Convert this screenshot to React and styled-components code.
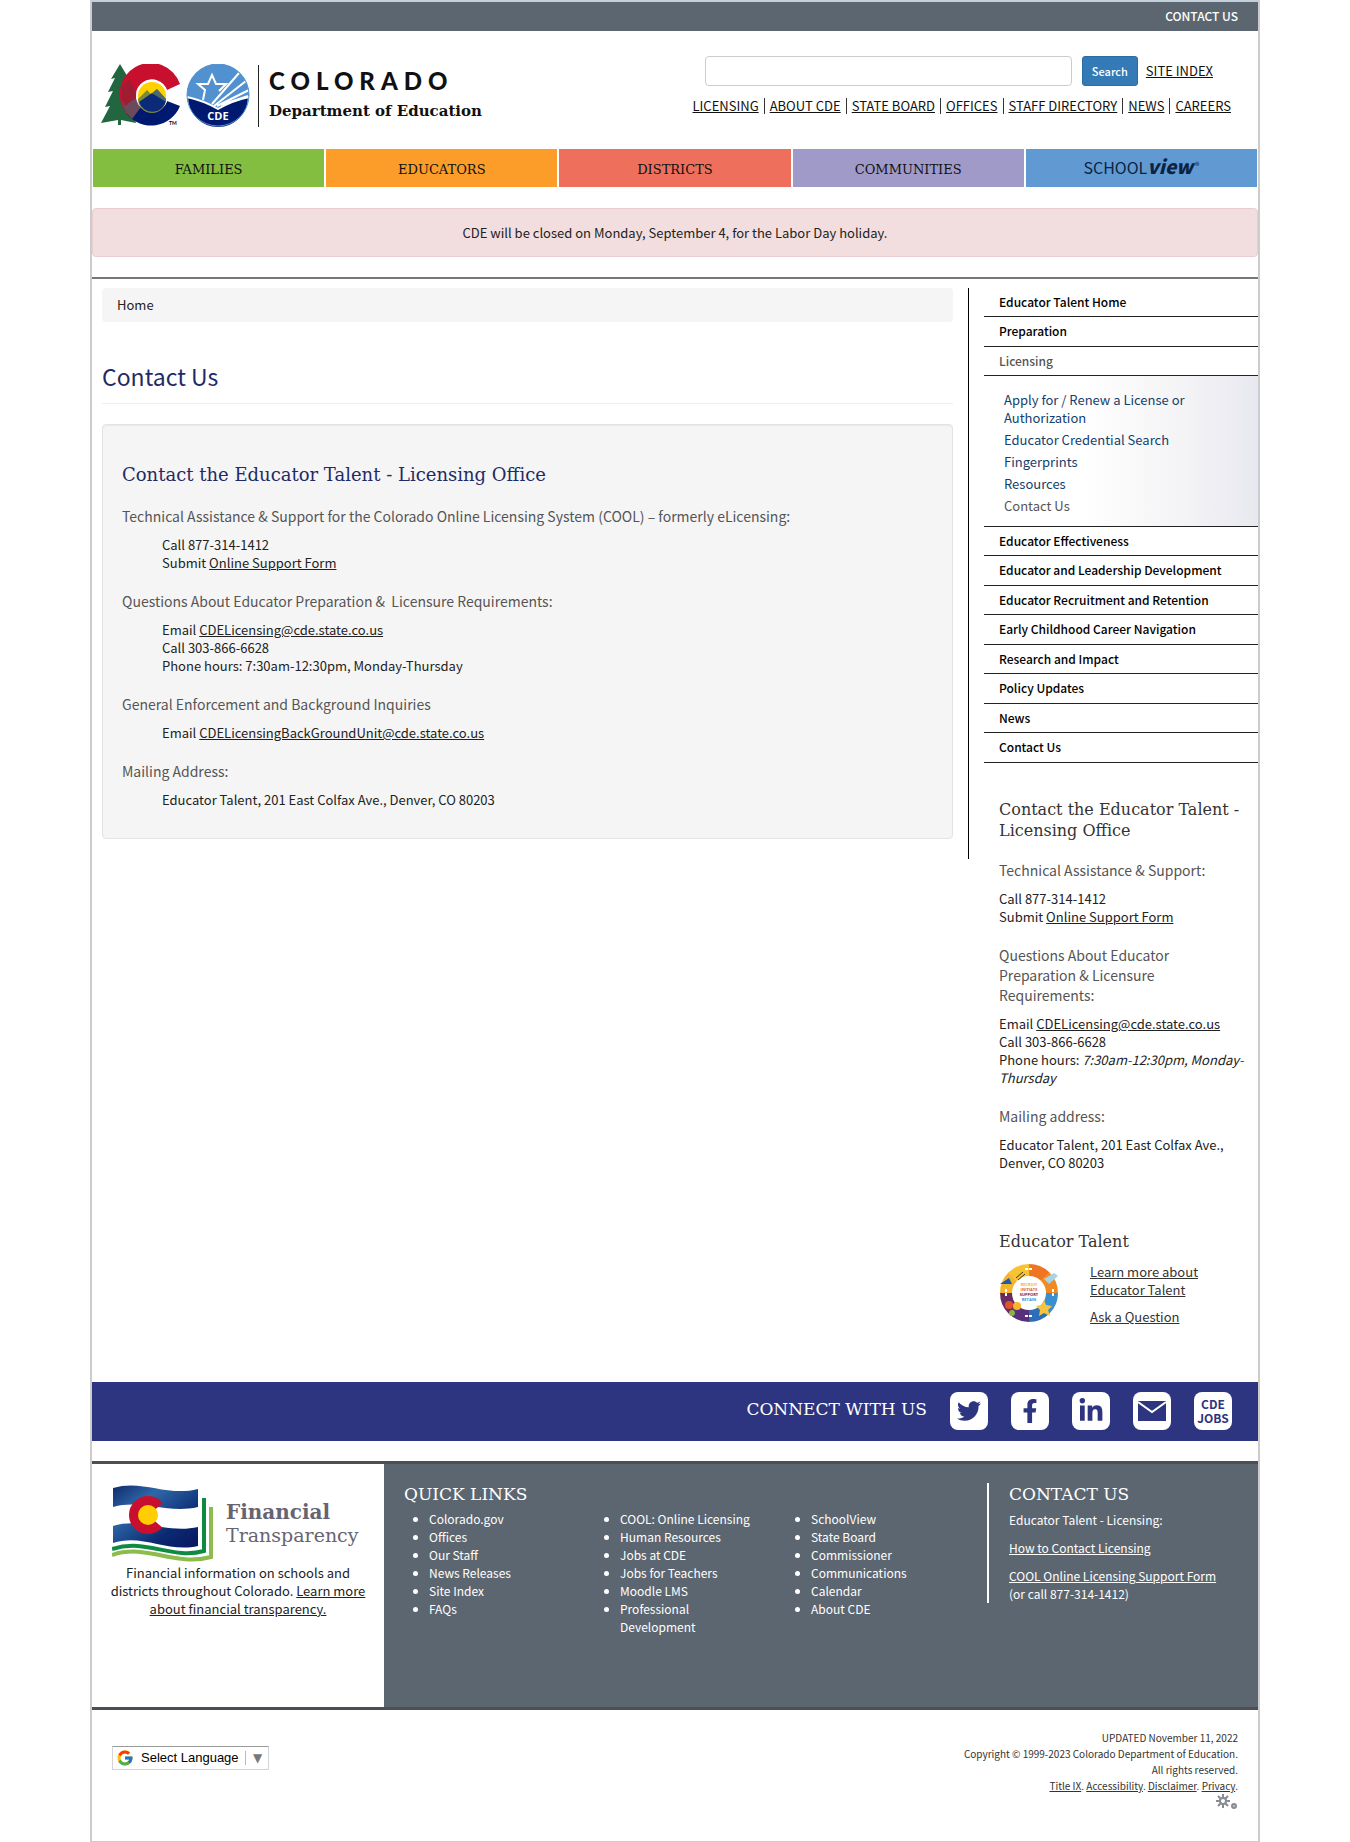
import React from "react";
import styled, { createGlobalStyle } from "styled-components";
import { FaTwitter, FaFacebookF, FaLinkedinIn } from "react-icons/fa";
import { FcGoogle } from "react-icons/fc";

const sans = `"Noto Sans CJK SC", "Noto Sans", sans-serif`;
const slab = `"DejaVu Serif", serif`;
const slate = "#5c6670";
const navy = "#1f2a66";

const GlobalStyle = createGlobalStyle`
  *, *::before, *::after { box-sizing: border-box; }
  body { margin: 0; background: #fff; color: #333; font: 400 13px/18px ${sans}; }
  h1, h2, h3, p, ul, address { margin: 0; padding: 0; font-weight: 400; font-style: normal; }
  ul { list-style: none; }
  a { color: inherit; }
`;

const Page = styled.div`
  max-width: 1170px;
  margin: 0 auto;
  border: 2px solid #ccc;
  border-top-color: #c3d0dc;
`;

const TopBar = styled.div`
  display: flex;
  justify-content: flex-end;
  align-items: center;
  height: 29px;
  padding: 0 20px 2px 0;
  background: ${slate};
`;

const TopLink = styled.a`
  color: #fff;
  font-size: 12px;
  font-weight: 500;
  text-decoration: none;
`;

const Header = styled.header`
  display: flex;
  justify-content: space-between;
  align-items: flex-start;
  height: 118px;
  padding: 25px 27px 0 9px;
`;

const Brand = styled.a`
  display: flex;
  align-items: center;
  padding-top: 8px;
  color: #111;
  text-decoration: none;
`;

const BrandText = styled.span`
  display: flex;
  flex-direction: column;
  gap: 2px;
  height: 62px;
  margin-left: 8px;
  padding-left: 10px;
  border-left: 1px solid #222;
`;

const BrandName = styled.span`
  font: 900 24px/32px Lato, sans-serif;
  letter-spacing: 6px;
`;

const BrandUnit = styled.span`
  font: 700 15px/24px ${slab};
`;

const HeaderTools = styled.div`
  display: flex;
  flex-direction: column;
  gap: 10px;
`;

const SearchForm = styled.form`
  display: flex;
  align-items: center;
  gap: 8px;
  padding: 0 18px 0 12px;
`;

const SearchInput = styled.input`
  flex: 1;
  height: 30px;
  margin-right: 2px;
  padding: 4px 12px;
  border: 1px solid #ccc;
  border-radius: 4px;
  font: 400 13px/18px ${sans};
`;

const SearchButton = styled.button`
  width: 56px;
  height: 30px;
  padding: 0;
  border: 1px solid #2e6da4;
  border-radius: 3px;
  background: #337ab7;
  color: #fff;
  font: 500 11px/18px ${sans};
`;

const DarkLink = styled.a`
  color: #111;
  font-size: 13px;
  line-height: 20px;
`;

const UtilityNav = styled.nav`
  display: flex;
  align-items: center;
  gap: 5px;
`;

const Divider = styled.span`
  width: 1px;
  height: 16px;
  background: #333;
`;

const AudienceNav = styled.nav`
  display: grid;
  grid-template-columns: repeat(5, 1fr);
  gap: 2px;
  padding: 0 1px;
`;

const AudienceTab = styled.a`
  display: flex;
  justify-content: center;
  align-items: center;
  height: 38px;
  padding-top: 4px;
  background: ${(p) => p.$color};
  color: #111;
  font: 400 13px/18px ${slab};
  text-decoration: none;
`;

const SchoolMark = styled.span`
  display: flex;
  align-items: baseline;
  padding-bottom: 8px;
  color: #0c2340;
  font: 400 16px/24px ${sans};

  b { font-size: 19px; font-weight: 900; font-style: italic; }
  small { margin-left: 2px; font-size: 9px; line-height: 12px; align-self: center; }
`;

const Alert = styled.div`
  margin-top: 21px;
  padding: 15px;
  border: 1px solid #ebccd1;
  border-radius: 4px;
  background: #f2dede;
  color: #222;
  line-height: 17px;
  text-align: center;
`;

const Main = styled.main`
  display: flex;
  align-items: flex-start;
  gap: 15px;
  margin-top: 20px;
  padding: 9px 0 56px 10px;
  border-top: 2px solid #777;
`;

const Content = styled.section`
  flex: 1;
  min-width: 0;
  padding: 0 15px 20px 0;
  border-right: 1px solid #000;
`;

const Breadcrumb = styled.nav`
  padding: 8px 15px;
  border-radius: 4px;
  background: #f5f5f5;

  a { color: #222; text-decoration: none; }
`;

const PageTitle = styled.h1`
  margin-top: 40px;
  padding-bottom: 13px;
  border-bottom: 1px solid #eee;
  color: ${navy};
  font-size: 23px;
  line-height: 28px;
`;

const Well = styled.div`
  margin-top: 20px;
  padding: 39px 19px 29px;
  border: 1px solid #e3e3e3;
  border-radius: 4px;
  background: #f5f5f5;
  box-shadow: inset 0 1px 1px rgba(0, 0, 0, 0.05);
`;

const WellTitle = styled.h2`
  padding-bottom: 1px;
  color: ${navy};
  font: 400 18px/22px ${slab};
`;

const AsideTitle = styled.h2`
  margin-top: ${(p) => p.$space};
  color: #333;
  font: 400 16px/21px ${slab};
`;

const Topic = styled.h3`
  margin: 19px 0 10px;
  color: #555;
  font-size: 14px;
  line-height: 20px;
`;

const Details = styled.address`
  padding-left: ${(p) => (p.$indent ? "40px" : "0")};
  color: #222;
`;

const Sidebar = styled.aside`
  flex: 0 0 274px;
`;

const SideItem = styled.li`
  height: 29px;
  padding: 5px 15px;
  border-bottom: 1px solid #222;
  font-size: 12px;
  font-weight: 500;

  &:nth-child(even) { height: 30px; }

  a { color: ${(p) => (p.$current ? "#555" : "#000")}; text-decoration: none; }
`;

const SubMenu = styled.li`
  padding: 15px 20px 11px;
  border-bottom: 1px solid #222;
  background: linear-gradient(to right, #fff 35%, #f3f3f5 75%, #e8e8f0);

  ul { display: flex; flex-direction: column; gap: 4px; }
`;

const SubLink = styled.a`
  display: block;
  max-width: 200px;
  color: ${(p) => (p.$current ? "#555" : "#14406e")};
  text-decoration: none;
`;

const SideBlock = styled.div`
  padding: 0 11px 0 15px;
`;

const TalentRow = styled.div`
  display: flex;
  gap: 30px;
  margin-top: 11px;
`;

const TalentLinks = styled.div`
  display: flex;
  flex-direction: column;
  align-items: flex-start;
  gap: 9px;
  max-width: 120px;
`;

const ConnectBar = styled.section`
  display: flex;
  justify-content: flex-end;
  align-items: center;
  gap: 23px;
  height: 59px;
  padding: 0 26px 2px 0;
  background: #2d3580;
`;

const ConnectTitle = styled.h2`
  padding-bottom: 4px;
  color: #fff;
  font: 400 17px/22px ${slab};
`;

const SocialLink = styled.a`
  display: flex;
  flex-direction: column;
  justify-content: center;
  align-items: center;
  width: 38px;
  height: 38px;
  border-radius: 8px;
  background: #fff;
  color: #2d3580;
  font: 700 12px/14px ${sans};
  text-decoration: none;
`;

const Footer = styled.footer`
  display: flex;
  margin-top: 20px;
  border: solid #4b5054;
  border-width: 3px 0;
  background: ${slate};
  color: #fff;
`;

const Finance = styled.section`
  flex: 0 0 292px;
  padding: 20px 16px;
  background: #fff;
  color: #222;
  text-align: center;
`;

const FinanceBrand = styled.div`
  display: flex;
  align-items: center;
  gap: 12px;
  height: 80px;
  padding-left: 4px;
  color: #666470;
  font: 400 19px/23px ${slab};
  text-align: left;

  b { display: block; font-size: 20px; }
`;

const FooterTitle = styled.h2`
  font: 400 17px/22px ${slab};
`;

const QuickLinks = styled.section`
  flex: 1;
  padding: 19px 10px 71px 20px;
  font-size: 12px;
  font-weight: 500;
`;

const LinkColumns = styled.div`
  display: grid;
  grid-template-columns: repeat(3, 1fr);
  margin-top: 5px;
`;

const LinkList = styled.ul`
  padding: 0 24px 0 25px;
  list-style: disc;

  a { text-decoration: none; }
`;

const FooterContact = styled.section`
  display: flex;
  flex-direction: column;
  align-self: flex-start;
  gap: 10px;
  flex: 0 0 271px;
  margin-top: 19px;
  padding-left: 20px;
  border-left: 2px solid #fff;
  font-size: 12px;
  font-weight: 500;

  h2 { margin-bottom: -4px; }
`;

const Legal = styled.div`
  display: flex;
  justify-content: space-between;
  align-items: flex-start;
  padding: 20px 20px 31px;
`;

const Language = styled.label`
  display: flex;
  align-items: center;
  height: 24px;
  margin-top: 16px;
  padding: 0 6px 0 3px;
  border: 1px solid #d5d5d5;
  border-top-color: #9b9b9b;
  color: #777;
  font: 400 13px/20px "Liberation Sans", sans-serif;
`;

const LanguageSelect = styled.select`
  appearance: none;
  margin: 0 6px 0 7px;
  padding: 0;
  border: 0;
  background: none;
  color: #000;
  font: inherit;
`;

const LanguageArrow = styled.span`
  padding-left: 7px;
  border-left: 1px solid #bbb;
  font: 400 12px/14px "DejaVu Sans", sans-serif;
`;

const LegalText = styled.div`
  color: #333;
  font-size: 10px;
  line-height: 16px;
  text-align: right;

  svg { display: block; margin-left: auto; }
`;

function StateLogo() {
  return (
    <svg width="149" height="63" viewBox="0 0 149 63" aria-hidden="true">
      <path d="M19 0l12 20-5-1 8 15-5-1 6 26-15-3v5h-3v-5L0 59l9-17-5 1 8-16-5 1 7-14-4 1z" fill="#22663f" />
      <path d="M79 20A31 31 0 1 0 26 50L40 43A16 16 0 1 1 66 26z" fill="#c8102e" />
      <path d="M26 50A31 31 0 0 0 79 42L66 37A16 16 0 0 1 39 42z" fill="#001970" />
      <path d="M21 38a31 31 0 0 0 10 17l9-12a16 16 0 0 1-4-8z" fill="#6b4a5c" />
      <path d="M21 22q-2 12 3 20l13-10-8-16z" fill="#a01c33" />
      <circle cx="51" cy="32" r="16" fill="#fff" />
      <circle cx="51" cy="32" r="14" fill="#ffd100" />
      <path d="M37 35l9-9 5 5 5-6 9 10a14 14 0 0 1-28 0z" fill="#7d8a3d" />
      <path d="M38 38l13-9 14 8a14 14 0 0 1-27 1z" fill="#0b2a78" />
      <path d="M56 25l9 10v3l-14-9z" fill="#4a6a6e" />
      <text x="68" y="61" fontFamily="Lato, sans-serif" fontSize="5" fontWeight="700">TM</text>
      <circle cx="117" cy="31" r="31" fill="#5291cf" />
      <path d="M86 33q18 4 31 12 13-8 31-12a31 31 0 0 1-62 0z" fill="#001970" stroke="#fff" strokeWidth="2" />
      <g fill="none" stroke="#fff" strokeWidth="2">
        <path d="M102 36l2-10-7-6h10l4-9 4 9h10l-7 7" />
        <path d="M111 40l27-31M113 42l32-25M116 42l32-16M120 41l27-9" />
      </g>
      <text x="117" y="56" textAnchor="middle" fill="#fff" fontFamily="Open Sans, sans-serif" fontSize="11" fontWeight="700">CDE</text>
      <circle cx="117" cy="31" r="31" fill="none" stroke="#5291cf" strokeWidth="1" />
    </svg>
  );
}

function FlagLogo() {
  return (
    <svg width="102" height="78" viewBox="0 0 102 78" aria-hidden="true">
      <defs>
        <linearGradient id="flagBlue" x1="0" y1="0" x2="1" y2="1">
          <stop offset="0" stopColor="#102a6c" />
          <stop offset="0.3" stopColor="#2e68a8" />
          <stop offset="0.7" stopColor="#0b2a72" />
          <stop offset="1" stopColor="#0a1560" />
        </linearGradient>
      </defs>
      <path d="M1 3C30-6 55 12 86 4V61C55 68 30 48 1 58z" fill="url(#flagBlue)" />
      <path d="M1 22C30 14 55 29 86 22V42C55 49 30 32 1 41z" fill="#fff" />
      <circle cx="36" cy="30" r="14" fill="none" stroke="#c8102e" strokeWidth="10" strokeDasharray="68 20" strokeDashoffset="-10" />
      <circle cx="36" cy="30" r="10" fill="#ffcd00" />
      <path d="M92 13V66C60 75 35 53 0 64" fill="none" stroke="#0f8a43" strokeWidth="4" />
      <path d="M99 22V72C62 82 35 58 0 70" fill="none" stroke="#8dbb4c" strokeWidth="4" />
    </svg>
  );
}

const ringColors = ["#ee7623", "#f08a24", "#3a8fd0", "#2c6fb8", "#56307a", "#6a2b62", "#f4b52e", "#f7c331"];
const ringWords = [["RECRUIT", "#f2b233"], ["INITIATE", "#e2602a"], ["SUPPORT", "#7a2340"], ["RETAIN", "#3a8fd0"]];

function TalentRing() {
  return (
    <svg width="61" height="61" viewBox="0 0 61 61" role="img" aria-label="Educator Talent cycle">
      <g fill="none" strokeWidth="12">
        {ringColors.map((color, i) => (
          <circle key={i} cx="30" cy="30" r="23" stroke={color} strokeDasharray="18.1 127" transform={`rotate(${i * 45 - 90} 30 30)`} />
        ))}
      </g>
      <path d="M1 21l9-6 3 6z" fill="#1f5ca8" />
      <path d="M17 15l7-6M19 17l7-6" stroke="#333" />
      <path d="M45 16l10-6 4 3-9 8z" fill="#a7d3e6" />
      <circle cx="10" cy="42" r="4" fill="#e2502a" />
      <circle cx="18" cy="43" r="4" fill="#f7b52e" />
      <circle cx="13" cy="50" r="3" fill="#8ab33f" />
      <path d="M45 37l2 5 6 1-4 4 2 6-6-3-5 3 1-6-4-4 5-1z" fill="#f5c542" />
      <path d="M26 6h8M26 53h8M54 26v8M7 26v8" stroke="#fff" strokeWidth="2" strokeDasharray="3 1" />
      <g fontFamily="Open Sans, sans-serif" fontSize="4" fontWeight="700" textAnchor="middle">
        {ringWords.map(([word, color], i) => (
          <text key={word} x="30" y={23 + i * 5} fill={color}>{word}</text>
        ))}
      </g>
    </svg>
  );
}

function MailIcon() {
  return (
    <svg width="28" height="20" viewBox="0 0 28 20" aria-hidden="true">
      <path d="M0 0h28v20H0z" fill="#2d3580" />
      <path d="M0 1l14 10L28 1" fill="none" stroke="#fff" strokeWidth="2" />
    </svg>
  );
}

function GearsIcon() {
  return (
    <svg width="22" height="16" viewBox="0 0 22 16" aria-hidden="true">
      <g stroke="#8a8c94" strokeWidth="2">
        <path d="M7 0v4M7 10v4M0 7h4M10 7h4M2 2l3 3M9 9l3 3M12 2L9 5M5 9l-3 3" />
        <circle cx="7" cy="7" r="3" fill="none" />
        <circle cx="18" cy="12" r="2" fill="#c4c5ca" />
      </g>
    </svg>
  );
}

const utility = ["LICENSING", "ABOUT CDE", "STATE BOARD", "OFFICES", "STAFF DIRECTORY", "NEWS", "CAREERS"];
const audiences = [["FAMILIES", "#84be41"], ["EDUCATORS", "#fb9d28"], ["DISTRICTS", "#ee705c"], ["COMMUNITIES", "#a09ac8"]];
const subLinks = ["Apply for / Renew a License or Authorization", "Educator Credential Search", "Fingerprints", "Resources", "Contact Us"];
const sideLinks = ["Educator Effectiveness", "Educator and Leadership Development", "Educator Recruitment and Retention", "Early Childhood Career Navigation", "Research and Impact", "Policy Updates", "News", "Contact Us"];
const quick = [
  ["Colorado.gov", "Offices", "Our Staff", "News Releases", "Site Index", "FAQs"],
  ["COOL: Online Licensing", "Human Resources", "Jobs at CDE", "Jobs for Teachers", "Moodle LMS", "Professional Development"],
  ["SchoolView", "State Board", "Commissioner", "Communications", "Calendar", "About CDE"],
];

export default function App() {
  return (
    <>
      <GlobalStyle />
      <Page>
        <TopBar><TopLink href="#contact">CONTACT US</TopLink></TopBar>
        <Header>
          <Brand href="#home">
            <StateLogo />
            <BrandText>
              <BrandName>COLORADO</BrandName>
              <BrandUnit>Department of Education</BrandUnit>
            </BrandText>
          </Brand>
          <HeaderTools>
            <SearchForm>
              <SearchInput type="text" aria-label="Search this site" />
              <SearchButton type="button">Search</SearchButton>
              <DarkLink href="#index">SITE INDEX</DarkLink>
            </SearchForm>
            <UtilityNav>
              {utility.map((name, i) => (
                <React.Fragment key={name}>
                  {i > 0 && <Divider />}
                  <DarkLink href="#utility">{name}</DarkLink>
                </React.Fragment>
              ))}
            </UtilityNav>
          </HeaderTools>
        </Header>
        <AudienceNav>
          {audiences.map(([name, color]) => (
            <AudienceTab key={name} href="#audience" $color={color}>{name}</AudienceTab>
          ))}
          <AudienceTab href="#schoolview" $color="#6199d2">
            <SchoolMark>SCHOOL<b>view</b><small>®</small></SchoolMark>
          </AudienceTab>
        </AudienceNav>
        <Alert role="status">CDE will be closed on Monday, September 4, for the Labor Day holiday.</Alert>

        <Main>
          <Content>
            <Breadcrumb><a href="#home">Home</a></Breadcrumb>
            <PageTitle>Contact Us</PageTitle>
            <Well>
              <WellTitle>Contact the Educator Talent - Licensing Office</WellTitle>
              <Topic>Technical Assistance &amp; Support for the Colorado Online Licensing System (COOL) – formerly eLicensing:</Topic>
              <Details $indent>
                Call 877-314-1412<br />
                Submit <a href="#form">Online Support Form</a>
              </Details>
              <Topic>Questions About Educator Preparation &amp;&nbsp; Licensure Requirements:</Topic>
              <Details $indent>
                Email <a href="#email">CDELicensing@cde.state.co.us</a><br />
                Call 303-866-6628<br />
                Phone hours: 7:30am-12:30pm, Monday-Thursday
              </Details>
              <Topic>General Enforcement and Background Inquiries</Topic>
              <Details $indent>
                Email <a href="#email">CDELicensingBackGroundUnit@cde.state.co.us</a>
              </Details>
              <Topic>Mailing Address:</Topic>
              <Details $indent>Educator Talent, 201 East Colfax Ave., Denver, CO 80203</Details>
            </Well>
          </Content>

          <Sidebar>
            <nav aria-label="Educator Talent">
              <ul>
                <SideItem><a href="#talent">Educator Talent Home</a></SideItem>
                <SideItem><a href="#preparation">Preparation</a></SideItem>
                <SideItem $current><a href="#licensing">Licensing</a></SideItem>
                <SubMenu>
                  <ul>
                    {subLinks.map((name, i) => (
                      <li key={name}><SubLink href="#sub" $current={i === 4}>{name}</SubLink></li>
                    ))}
                  </ul>
                </SubMenu>
                {sideLinks.map((name) => (
                  <SideItem key={name}><a href="#side">{name}</a></SideItem>
                ))}
              </ul>
            </nav>
            <SideBlock>
              <AsideTitle $space="36px">Contact the Educator Talent - Licensing Office</AsideTitle>
              <Topic>Technical Assistance &amp; Support:</Topic>
              <Details>
                Call 877-314-1412<br />
                Submit <a href="#form">Online Support Form</a>
              </Details>
              <Topic>Questions About Educator Preparation &amp; Licensure Requirements:</Topic>
              <Details>
                Email <a href="#email">CDELicensing@cde.state.co.us</a><br />
                Call 303-866-6628<br />
                Phone hours: <em>7:30am-12:30pm, Monday-Thursday</em>
              </Details>
              <Topic>Mailing address:</Topic>
              <Details>Educator Talent, 201 East Colfax Ave., Denver, CO 80203</Details>
              <AsideTitle $space="59px">Educator Talent</AsideTitle>
              <TalentRow>
                <TalentRing />
                <TalentLinks>
                  <a href="#learn">Learn more about Educator Talent</a>
                  <a href="#ask">Ask a Question</a>
                </TalentLinks>
              </TalentRow>
            </SideBlock>
          </Sidebar>
        </Main>

        <ConnectBar>
          <ConnectTitle>CONNECT WITH US</ConnectTitle>
          <SocialLink href="#twitter" aria-label="Twitter"><FaTwitter size={24} /></SocialLink>
          <SocialLink href="#facebook" aria-label="Facebook"><FaFacebookF size={24} /></SocialLink>
          <SocialLink href="#linkedin" aria-label="LinkedIn"><FaLinkedinIn size={26} /></SocialLink>
          <SocialLink href="#mail" aria-label="Email"><MailIcon /></SocialLink>
          <SocialLink href="#jobs"><span>CDE</span><span>JOBS</span></SocialLink>
        </ConnectBar>

        <Footer>
          <Finance>
            <FinanceBrand>
              <FlagLogo />
              <span><b>Financial</b>Transparency</span>
            </FinanceBrand>
            <p>
              Financial information on schools and districts throughout Colorado.{" "}
              <a href="#finance">Learn more about financial transparency.</a>
            </p>
          </Finance>
          <QuickLinks>
            <FooterTitle>QUICK LINKS</FooterTitle>
            <LinkColumns>
              {quick.map((names) => (
                <LinkList key={names[0]}>
                  {names.map((name) => <li key={name}><a href="#quick">{name}</a></li>)}
                </LinkList>
              ))}
            </LinkColumns>
          </QuickLinks>
          <FooterContact>
            <FooterTitle>CONTACT US</FooterTitle>
            <p>Educator Talent - Licensing:</p>
            <p><a href="#how">How to Contact Licensing</a></p>
            <p><a href="#cool">COOL Online Licensing Support Form</a><br />(or call 877-314-1412)</p>
          </FooterContact>
        </Footer>

        <Legal>
          <Language>
            <FcGoogle size={18} />
            <LanguageSelect aria-label="Select Language">
              <option>Select Language</option>
            </LanguageSelect>
            <LanguageArrow aria-hidden="true">▼</LanguageArrow>
          </Language>
          <LegalText>
            <p>UPDATED November 11, 2022</p>
            <p>Copyright © 1999-2023 Colorado Department of Education.</p>
            <p>All rights reserved.</p>
            <p>
              <a href="#title-ix">Title IX</a>. <a href="#accessibility">Accessibility</a>. <a href="#disclaimer">Disclaimer</a>. <a href="#privacy">Privacy</a>.
            </p>
            <GearsIcon />
          </LegalText>
        </Legal>
      </Page>
    </>
  );
}
